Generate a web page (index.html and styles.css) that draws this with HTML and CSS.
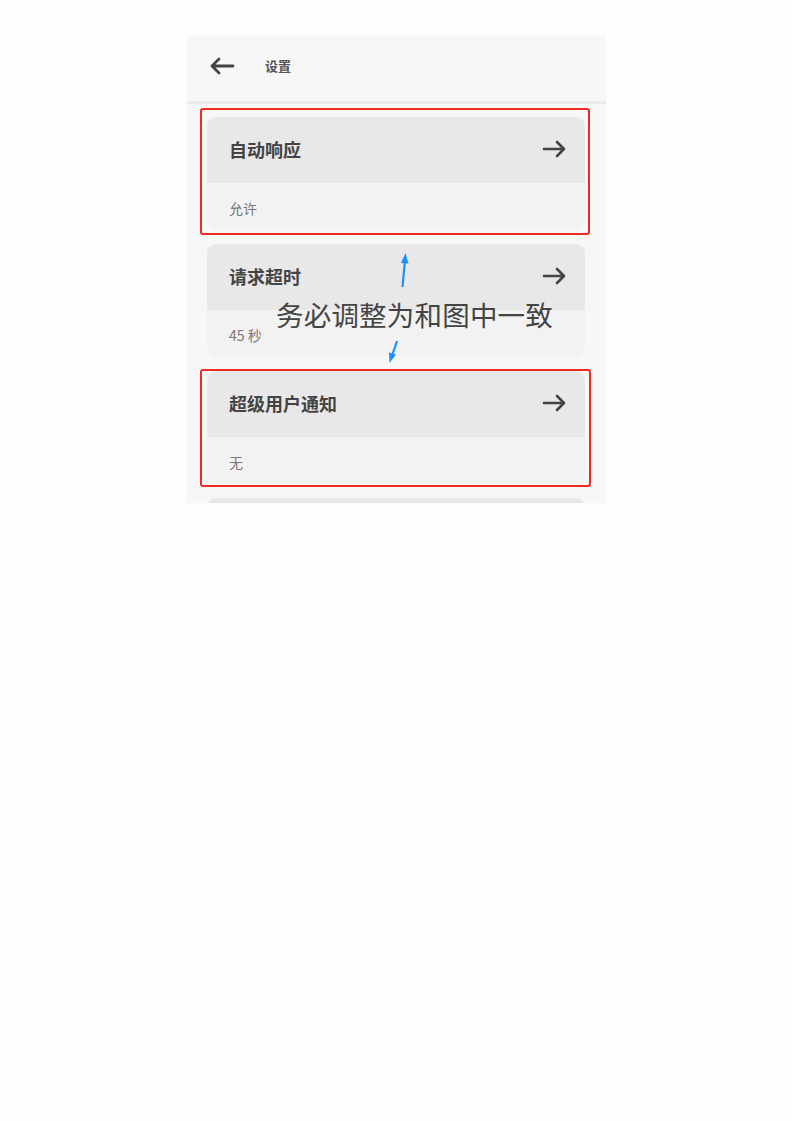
FILE: index.html
```html
<!DOCTYPE html>
<html lang="zh-CN">
<head>
	<meta charset="UTF-8">
	<meta name="viewport" content="width=device-width, initial-scale=1.0">
	<title>设置</title>
	<link rel="stylesheet" href="styles.css">
</head>
<body>
	<div class="screen">
		<div class="topbar">
			<svg class="back" width="26" height="18" viewBox="0 0 26 18">
				<path d="M24 9H3M10 2L3 9l7 7" fill="none" stroke="#444" stroke-width="2.8" stroke-linecap="round" stroke-linejoin="round"/>
			</svg>
			<span class="title">设置</span>
		</div>

		<div class="list">
			<div class="card">
				<div class="card-head">
					<span class="card-title">自动响应</span>
					<svg class="go" width="25" height="18" viewBox="0 0 25 18">
						<path d="M2 9h20M15 2l7 7-7 7" fill="none" stroke="#444" stroke-width="2.6" stroke-linecap="round" stroke-linejoin="round"/>
					</svg>
				</div>
				<div class="card-body">允许</div>
			</div>

			<div class="card">
				<div class="card-head">
					<span class="card-title">请求超时</span>
					<svg class="go" width="25" height="18" viewBox="0 0 25 18">
						<path d="M2 9h20M15 2l7 7-7 7" fill="none" stroke="#444" stroke-width="2.6" stroke-linecap="round" stroke-linejoin="round"/>
					</svg>
				</div>
				<div class="card-body">45 秒</div>
			</div>

			<div class="card">
				<div class="card-head">
					<span class="card-title">超级用户通知</span>
					<svg class="go" width="25" height="18" viewBox="0 0 25 18">
						<path d="M2 9h20M15 2l7 7-7 7" fill="none" stroke="#444" stroke-width="2.6" stroke-linecap="round" stroke-linejoin="round"/>
					</svg>
				</div>
				<div class="card-body">无</div>
			</div>

			<div class="card">
				<div class="card-head"></div>
			</div>
		</div>

		<!-- annotation layer -->
		<div class="mark mark-1"></div>
		<div class="mark mark-2"></div>
		<svg class="pointers" width="419" height="467" viewBox="0 0 419 467">
			<path d="M215.5 251 L218 224" stroke="#1e8fff" stroke-width="2.2" fill="none"/>
			<path d="M218.5 217 L214 227 L221.5 227.5 Z" fill="#1e8fff"/>
			<path d="M210 305 L205 320" stroke="#1e8fff" stroke-width="2.2" fill="none"/>
			<path d="M202.5 327 L202 316.5 L209 318.5 Z" fill="#1e8fff"/>
		</svg>
		<div class="note">务必调整为和图中一致</div>
	</div>
</body>
</html>
```

FILE: styles.css
```css
* {
	margin: 0;
	padding: 0;
	box-sizing: border-box;
}

body {
	background: #fdfdfd;
	font-family: "Noto Sans CJK SC", "Noto Sans", sans-serif;
}

.screen {
	position: relative;
	width: 419px;
	height: 467px;
	margin: 36px 0 0 187px;
	background: #f7f7f7;
	overflow: hidden;
}

.topbar {
	height: 68px;
	display: flex;
	align-items: center;
	padding: 0 0 6px 22px;
	border-bottom: 3px solid #ececec;
}

.back {
	margin-right: 30px;
}

.title {
	font-size: 13px;
	font-weight: 700;
	color: #555;
}

.list {
	display: flex;
	flex-direction: column;
	gap: 15px;
	padding: 13px 21px 0 20px;
}

.card {
	border-radius: 9px;
	overflow: hidden;
	background: #f2f2f2;
}

.card-head {
	height: 66px;
	background: #e8e8e8;
	display: flex;
	align-items: center;
	justify-content: space-between;
	padding: 0 18px 3px 22px;
}

.card-title {
	font-size: 18px;
	font-weight: 700;
	color: #444;
}

.card-body {
	height: 46px;
	padding: 15px 0 0 22px;
	font-size: 14px;
	color: #777;
}

.mark {
	position: absolute;
	border: 2.5px solid #ee2a22;
	border-radius: 3px;
}

.mark-1 {
	left: 13px;
	top: 72px;
	width: 390px;
	height: 127px;
}

.mark-2 {
	left: 13px;
	top: 333px;
	width: 391px;
	height: 118px;
}

.pointers {
	position: absolute;
	left: 0;
	top: 0;
}

.note {
	position: absolute;
	left: 89px;
	top: 262px;
	font-size: 27.5px;
	line-height: 1.2;
	color: #444;
	letter-spacing: 0.2px;
}
```
